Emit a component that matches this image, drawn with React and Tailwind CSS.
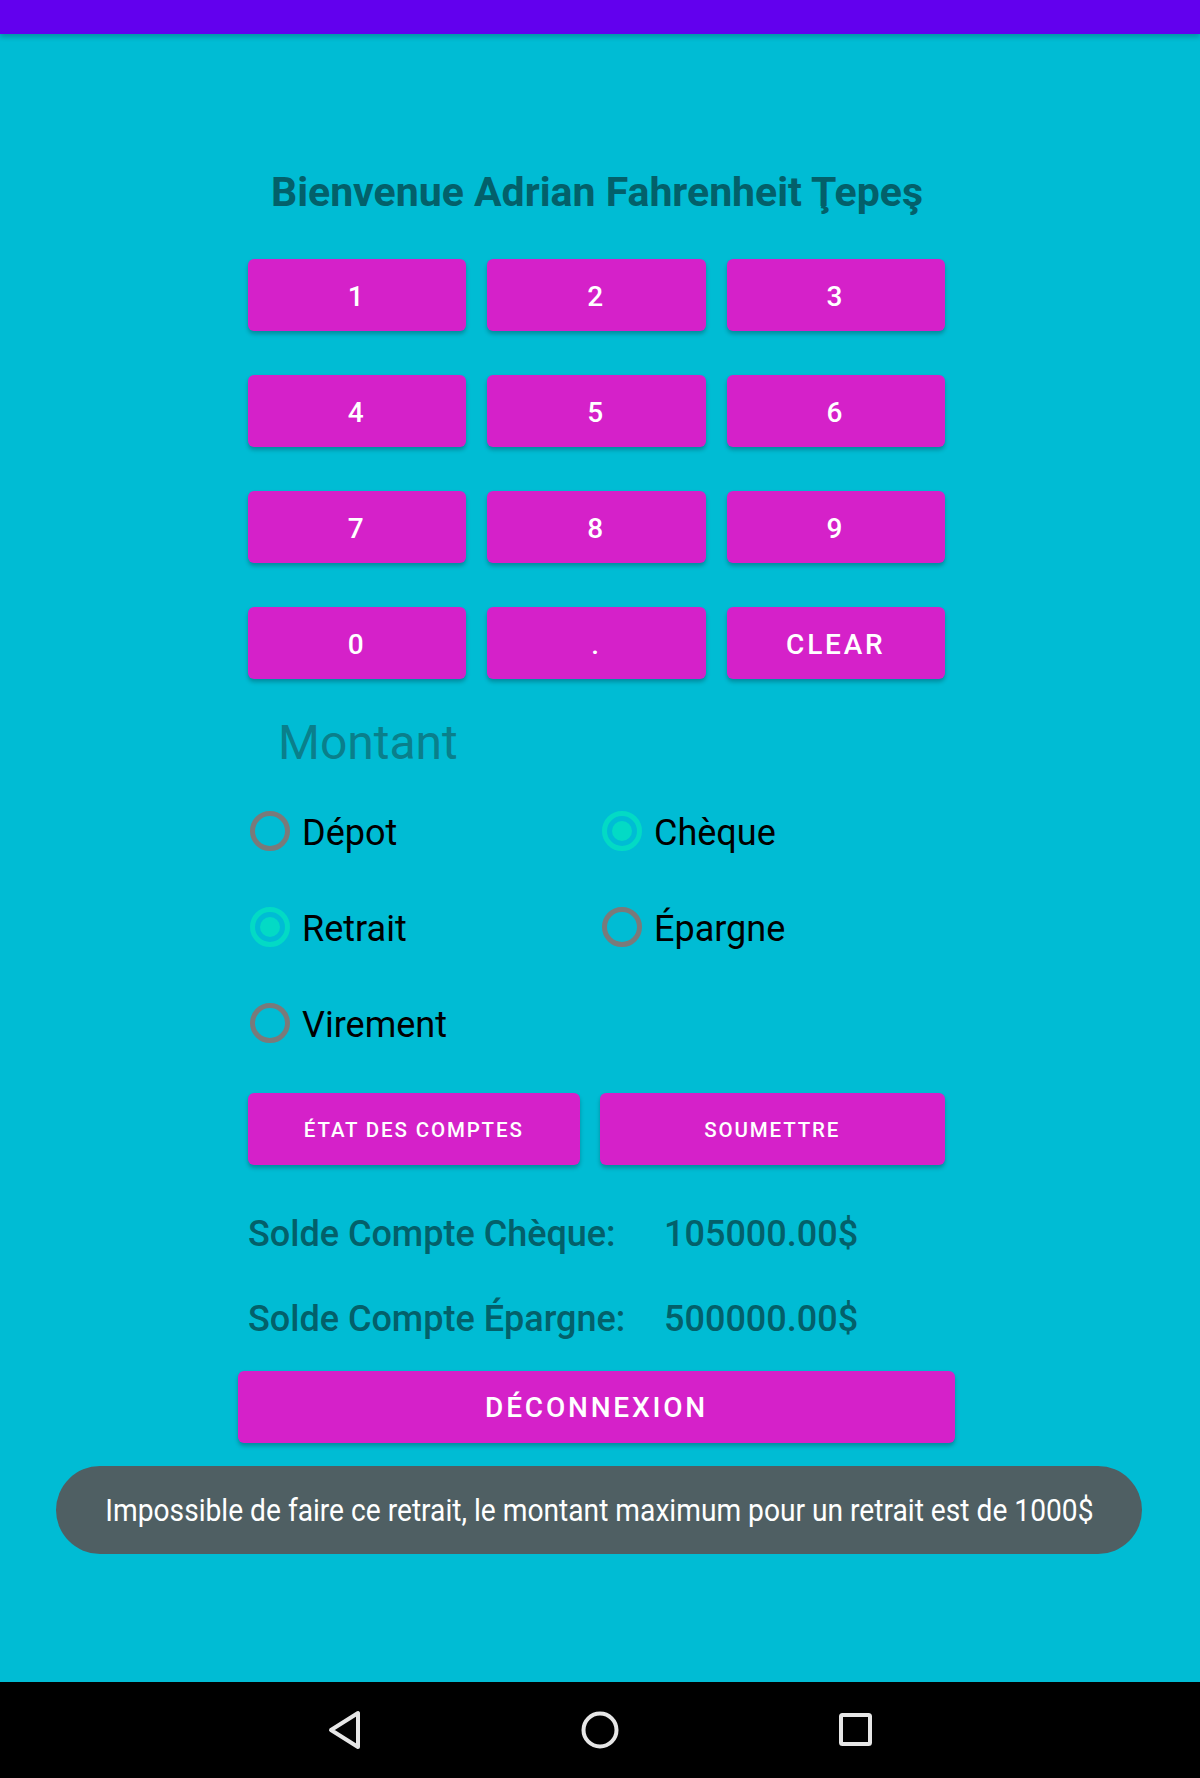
import React from "react";

const F = { fontFamily: "Roboto, 'Noto Sans', sans-serif" };

function KeyBtn({ label }) {
  return (
    <button className="h-[72px] pt-[3px] rounded-[6px] bg-[#d521c9] text-white text-[28px] leading-none font-medium tracking-[0.1em] shadow-[0_3px_4px_rgba(0,0,0,0.25)] flex items-center justify-center">
      {label}
    </button>
  );
}

function Radio({ label, checked }) {
  return (
    <div className="flex items-center h-[96px]">
      {checked ? (
        <span className="ml-[2px] w-[40px] h-[40px] rounded-full border-[5px] border-[#03dac5] flex items-center justify-center shrink-0">
          <span className="w-[20px] h-[20px] rounded-full bg-[#03dac5]" />
        </span>
      ) : (
        <span className="ml-[2px] w-[40px] h-[40px] rounded-full border-[5px] border-[#7a7a7a] shrink-0" />
      )}
      <span className="ml-[12px] mt-[4px] text-[36px] leading-[42px] text-black">{label}</span>
    </div>
  );
}

export default function App() {
  const keys = ["1", "2", "3", "4", "5", "6", "7", "8", "9", "0", ".", "CLEAR"];
  return (
    <div style={F} className="relative w-[1200px] h-[1778px] bg-[#00bcd4] flex flex-col overflow-hidden">
      <div className="h-[34px] bg-[#6200ee] shadow-[0_3px_5px_rgba(0,0,0,0.22)] shrink-0 relative z-10" />
      <div className="relative flex-1 flex flex-col">
        <h1 className="mt-[134px] text-center text-[41px] leading-[48px] font-bold text-[#03606a] w-[1194px]">
          Bienvenue Adrian Fahrenheit Ţepeş
        </h1>
        <div className="ml-[248px] w-[697px] flex flex-col">
          <div className="mt-[43px] grid grid-cols-3 gap-x-[21px] gap-y-[44px]">
            {keys.map((k) => (
              <KeyBtn key={k} label={k} />
            ))}
          </div>
          <div className="mt-[37px] pl-[30px] text-[48px] leading-[54px] text-[#0a7f8b]">Montant</div>
          <div className="mt-[13px] grid grid-cols-[352px_1fr]">
            <Radio label="Dépot" />
            <Radio label="Chèque" checked />
            <Radio label="Retrait" checked />
            <Radio label="Épargne" />
            <Radio label="Virement" />
          </div>
          <div className="mt-[22px] flex gap-[20px]">
            <button className="w-[332px] h-[72px] pt-[2px] rounded-[6px] bg-[#d521c9] text-white text-[20.5px] font-medium tracking-[0.09em] shadow-[0_3px_4px_rgba(0,0,0,0.25)]">
              ÉTAT DES COMPTES
            </button>
            <button className="w-[346px] h-[72px] pt-[2px] rounded-[6px] bg-[#d521c9] text-white text-[20.5px] font-medium tracking-[0.09em] shadow-[0_3px_4px_rgba(0,0,0,0.25)]">
              SOUMETTRE
            </button>
          </div>
          <div className="mt-[48px] grid grid-cols-[416px_1fr] gap-y-[43px] text-[36px] leading-[42px] font-medium text-[#03606a]">
            <div>Solde Compte Chèque:</div>
            <div>105000.00$</div>
            <div>Solde Compte Épargne:</div>
            <div>500000.00$</div>
          </div>
        </div>
        <button className="mt-[31px] ml-[238px] w-[717px] h-[72px] pt-[2px] rounded-[6px] bg-[#d521c9] text-white text-[28px] font-medium tracking-[0.1em] shadow-[0_3px_4px_rgba(0,0,0,0.25)]">
          DÉCONNEXION
        </button>
        <div className="absolute left-[56px] bottom-[128px] w-[1086px] h-[88px] rounded-full bg-[#4f5f63] flex items-center justify-center overflow-hidden">
          <span className="whitespace-nowrap text-white text-[32px] leading-none scale-x-[0.88] inline-block">
            Impossible de faire ce retrait, le montant maximum pour un retrait est de 1000$
          </span>
        </div>
      </div>
      <div className="h-[96px] bg-black shrink-0 flex items-center justify-center">
        <svg width="1200" height="96" viewBox="0 0 1200 96" fill="none" stroke="#e6e6e6" strokeWidth="4" strokeLinejoin="round">
          <path d="M358 31 L358 65 L331 48 Z" />
          <circle cx="600" cy="48" r="16.5" />
          <rect x="841" y="33" width="29" height="29" rx="1.5" />
        </svg>
      </div>
    </div>
  );
}
